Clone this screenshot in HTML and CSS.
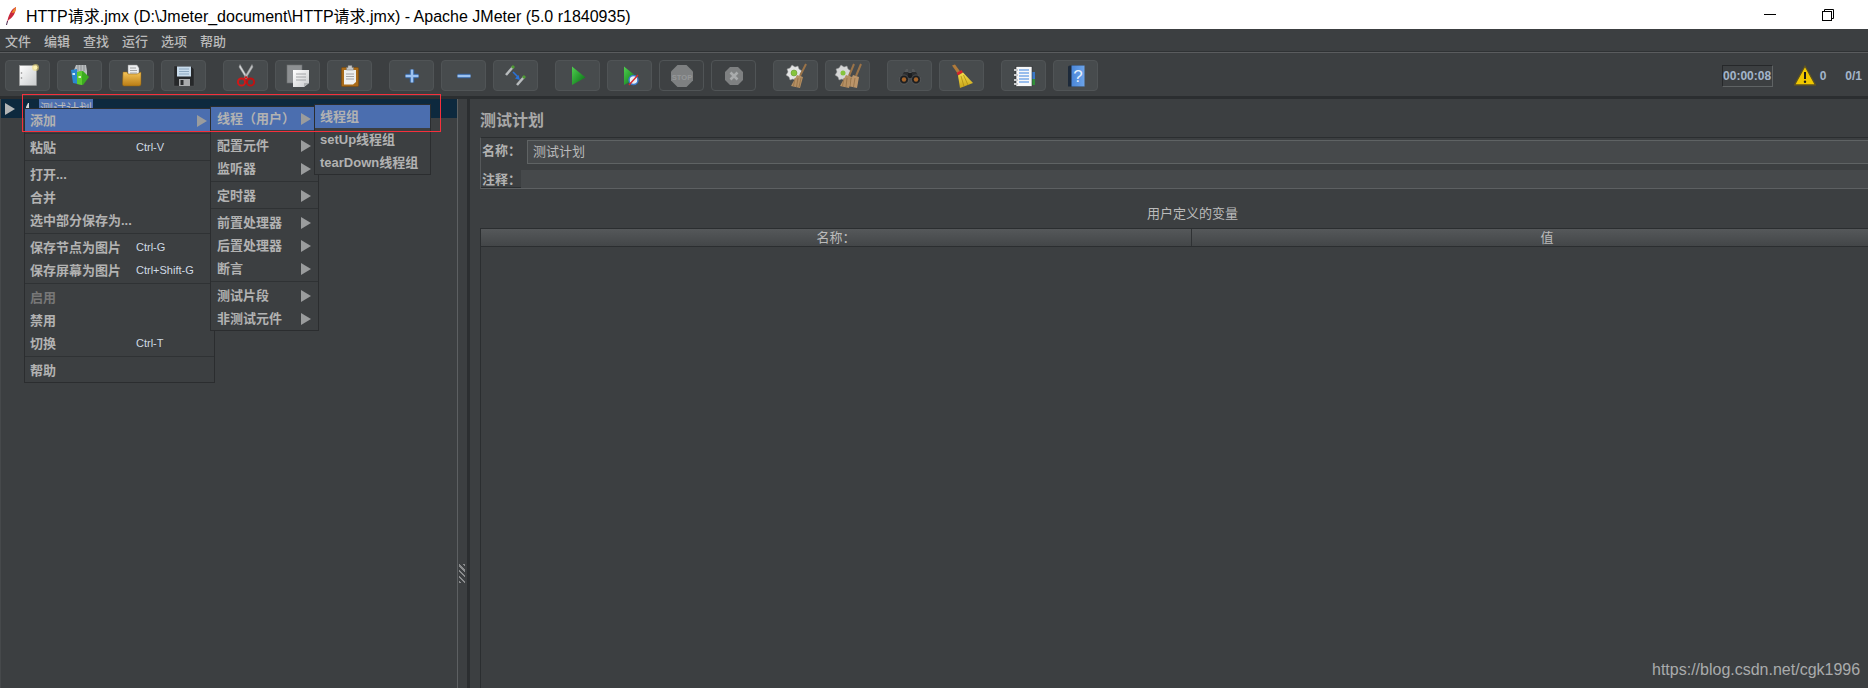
FILE: index.html
```html
<!DOCTYPE html>
<html>

<head>
    <title>Apache JMeter</title>
    <meta charset="utf-8">
    <link rel="stylesheet" href="styles.css">
</head>

<body>
    <!-- shared gradients for the toolbar icons -->
    <svg class="defs" width="0" height="0">
        <defs>
            <linearGradient id="gPage" x1="0" y1="0" x2="1" y2="1">
                <stop offset="0" stop-color="#ffffff" />
                <stop offset="1" stop-color="#c9cbcc" />
            </linearGradient>
            <linearGradient id="gFolder" x1="0" y1="0" x2="0" y2="1">
                <stop offset="0" stop-color="#f5c55a" />
                <stop offset="1" stop-color="#b97c14" />
            </linearGradient>
            <linearGradient id="gPlay" x1="0" y1="0" x2="1" y2="1">
                <stop offset="0" stop-color="#4fd04f" />
                <stop offset="1" stop-color="#056b12" />
            </linearGradient>
            <linearGradient id="gBroom" x1="0" y1="0" x2="0" y2="1">
                <stop offset="0" stop-color="#f4dd4c" />
                <stop offset="1" stop-color="#c9a416" />
            </linearGradient>
            <linearGradient id="gHelp" x1="0" y1="0" x2="1" y2="0">
                <stop offset="0" stop-color="#4a86d8" />
                <stop offset="1" stop-color="#6ca4ea" />
            </linearGradient>
        </defs>
    </svg>

    <header class="titlebar">
        <svg class="feather" viewBox="0 0 12 22" width="12" height="22">
            <path d="M2 19 C3 12 6 5 11 3 C11 8 8 14 3.5 16 Z" fill="#c8283c" />
            <path d="M6.5 9 C8 6 9.500 4 11 3 C11 5 10.500 7 9.500 8.500 Z" fill="#ef8a2b" />
            <path d="M1.500 21 L2.500 17" stroke="#4a2a50" stroke-width="1" />
        </svg>
        <span class="titlebar-text">HTTP请求.jmx (D:\Jmeter_document\HTTP请求.jmx) - Apache JMeter (5.0 r1840935)</span>
        <div class="window-buttons">
            <svg viewBox="0 0 12 2" width="12" height="2">
                <path d="M0 .5 H12" stroke="#000" stroke-width="1" />
            </svg>
            <svg viewBox="0 0 12 12" width="12" height="12">
                <rect x=".5" y="2.500" width="9" height="9" fill="none" stroke="#000" />
                <path d="M2.500 2.500 V.5 H11.500 V9.500 H9.500" fill="none" stroke="#000" />
            </svg>
        </div>
    </header>

    <nav class="menubar">
        <span>文件</span>
        <span>编辑</span>
        <span>查找</span>
        <span>运行</span>
        <span>选项</span>
        <span>帮助</span>
    </nav>

    <div class="toolbar">
        <div class="tool-group">
            <button class="tool">
                <svg viewBox="0 0 28 28">
                    <rect x="5.500" y="3.500" width="17" height="20" fill="url(#gPage)" stroke="#9a9c9c" stroke-width=".6" />
                    <circle cx="7.500" cy="11" r=".8" fill="#888" />
                    <circle cx="7.500" cy="16" r=".8" fill="#888" />
                    <circle cx="21.500" cy="5.500" r="3.500" fill="#f4e07a" opacity=".55" />
                    <circle cx="21.500" cy="5.500" r="2" fill="#fff3b0" />
                </svg>
            </button>
            <button class="tool">
                <svg viewBox="0 0 28 28">
                    <path d="M8 8 L10 3 H20 L21 9 V14 H9 Z" fill="#b9bdbf" />
                    <path d="M12 3 V9 M15 3 V9 M18 3 V9" stroke="#8b8f91" stroke-width="1" />
                    <path d="M5 8 L11 7 L12 22 L7 21 Z" fill="#2a88d0" />
                    <path d="M11 10 L17 9 L23 15 L17 23 L11 22 Z" fill="#3cab20" />
                    <path d="M11 10 L16 9 V23 L11 22 Z" fill="#5ccb30" />
                    <rect x="6.500" y="11" width="2.500" height="2" fill="#cde6f7" />
                    <rect x="12.500" y="14" width="2.500" height="2" fill="#d6f3c8" />
                </svg>
            </button>
            <button class="tool">
                <svg viewBox="0 0 28 28">
                    <path d="M10 3 H19 L21 6 V14 H10 Z" fill="#eceef0" stroke="#8a8a8a" stroke-width=".5" />
                    <path d="M12 6 H18 M12 8.500 H19 M12 11 H19" stroke="#909090" stroke-width=".8" />
                    <path d="M5 10 H9 L10 12 H19 L23 10 V22 Q23 24 21 24 H6 Q4.500 24 4.500 22 Z" fill="url(#gFolder)" stroke="#8f6210" stroke-width=".5" />
                </svg>
            </button>
            <button class="tool">
                <svg viewBox="0 0 28 28">
                    <path d="M4 4 H21 L24 7 V24 H4 Z" fill="#26282a" stroke="#55585a" stroke-width=".4" />
                    <rect x="7" y="4.500" width="14" height="10" fill="#c9dcec" />
                    <path d="M9 7 H19 M9 9.500 H19 M9 12 H19" stroke="#7d9ab5" stroke-width=".8" />
                    <rect x="9" y="17" width="11" height="7" fill="#a8aaac" />
                    <rect x="10.500" y="18" width="3" height="5" fill="#2a2c2e" />
                </svg>
            </button>
        </div>
        <div class="tool-group">
            <button class="tool">
                <svg viewBox="0 0 28 28">
                    <path d="M8 2.500 L16 16 L14.500 17 L7 5 Z" fill="#d5d7d8" stroke="#8d8f90" stroke-width=".5" />
                    <path d="M20 2.500 L12 16 L13.500 17 L21 5 Z" fill="#bfc1c2" stroke="#8d8f90" stroke-width=".5" />
                    <circle cx="9.500" cy="20" r="3.600" fill="none" stroke="#d01818" stroke-width="2" />
                    <circle cx="18.500" cy="20" r="3.600" fill="none" stroke="#c01212" stroke-width="2" />
                    <path d="M12 17 L14 15 L16 17" fill="none" stroke="#d01818" stroke-width="1.600" />
                </svg>
            </button>
            <button class="tool">
                <svg viewBox="0 0 28 28">
                    <rect x="3" y="3" width="15" height="18" fill="#8d9092" stroke="#6d7072" stroke-width=".6" />
                    <path d="M9 8 H25 V21 L20 25 H9 Z" fill="url(#gPage)" />
                    <path d="M12 12 H22 M12 15 H22 M12 18 H22" stroke="#9a9c9e" stroke-width=".9" />
                    <path d="M20 25 V21 H25 Z" fill="#b0b2b4" />
                </svg>
            </button>
            <button class="tool">
                <svg viewBox="0 0 28 28">
                    <rect x="5.500" y="5.500" width="17" height="19" rx="1" fill="#a86a18" stroke="#7a4a0c" stroke-width=".6" />
                    <path d="M8 8 H20 V20 L17 22.500 H8 Z" fill="#eeefef" />
                    <path d="M10 12 H18 M10 14.500 H18 M10 17 H18" stroke="#8f9193" stroke-width=".8" />
                    <path d="M10.500 8 V5.500 H12 V3.500 H16 V5.500 H17.500 V8 Z" fill="#c3c5c6" stroke="#77797a" stroke-width=".5" />
                </svg>
            </button>
        </div>
        <div class="tool-group">
            <button class="tool">
                <svg viewBox="0 0 28 28">
                    <path d="M14 7.500 V20.500 M7.500 14 H20.500" stroke="#2f5f9f" stroke-width="4.500" />
                    <path d="M14 7.500 V20.500 M7.500 14 H20.500" stroke="#9cc2f0" stroke-width="2.500" />
                </svg>
            </button>
            <button class="tool">
                <svg viewBox="0 0 28 28">
                    <path d="M7.500 14 H20.500" stroke="#2f5f9f" stroke-width="4.500" />
                    <path d="M7.500 14 H20.500" stroke="#9cc2f0" stroke-width="2.500" />
                </svg>
            </button>
            <button class="tool">
                <svg viewBox="0 0 28 28">
                    <path d="M4 13 L11 5" stroke="#b8bcbe" stroke-width="2.500" />
                    <path d="M10 6 L12 4" stroke="#4f9a35" stroke-width="3" />
                    <path d="M15 23 L22 15" stroke="#b8bcbe" stroke-width="2.500" />
                    <path d="M21 16 L23 14" stroke="#4f9a35" stroke-width="3" />
                    <path d="M11 10 L16 15" stroke="#2a72d8" stroke-width="1.600" />
                    <path d="M18 18 L13 16.500 L16.500 13 Z" fill="#2a72d8" />
                </svg>
            </button>
        </div>
        <div class="tool-group">
            <button class="tool">
                <svg viewBox="0 0 28 28">
                    <path d="M8 4.500 L21.500 15.500 L8 23 Z" fill="url(#gPlay)" />
                </svg>
            </button>
            <button class="tool">
                <svg viewBox="0 0 28 28">
                    <path d="M8 4.500 L21.500 15.500 L8 23 Z" fill="url(#gPlay)" />
                    <circle cx="17.500" cy="18" r="4.500" fill="#e8eef6" stroke="#3a78c8" stroke-width="1.500" />
                    <path d="M13 23 L22 13" stroke="#d82a2a" stroke-width="1.400" />
                </svg>
            </button>
            <button class="tool tool-off">
                <svg viewBox="0 0 28 28">
                    <path d="M9.500 3 H18.500 L25 9.500 V18.500 L18.500 25 H9.500 L3 18.500 V9.500 Z" fill="#7e8081" />
                    <text x="14" y="17.500" class="stop-text">STOP</text>
                </svg>
            </button>
            <button class="tool tool-off">
                <svg viewBox="0 0 28 28">
                    <path d="M10 5 H18 L23 10 V18 L18 23 H10 L5 18 V10 Z" fill="#7e8081" />
                    <path d="M10.500 10.500 L17.500 17.500 M17.500 10.500 L10.500 17.500" stroke="#a9abac" stroke-width="2.600" />
                </svg>
            </button>
        </div>
        <div class="tool-group">
            <button class="tool">
                <svg viewBox="0 0 28 28">
                    <path d="M10 3 L13 5 L16 4 L17 7 L20 9 L18 12 L19 15 L16 16 L14 19 L11 17 L8 18 L7 15 L4 13 L6 10 L5 7 L8 6 Z" fill="#e3e4e4" stroke="#8f9192" stroke-width=".5" />
                    <circle cx="12" cy="11" r="3" fill="#86c43c" stroke="#5c8a2a" stroke-width=".5" />
                    <path d="M24 2 L18 14" stroke="#9a7348" stroke-width="2" />
                    <path d="M15 13 L21 15 L18 26 L9 24 Z" fill="#b58f62" />
                    <path d="M13 16 L11.500 24 M16 16 L14.500 25 M19 16 L17 25" stroke="#8b6a42" stroke-width=".7" />
                </svg>
            </button>
            <button class="tool">
                <svg viewBox="0 0 28 28">
                    <path d="M7 3 L10 5 L13 4 L14 7 L17 9 L15 12 L16 15 L13 16 L11 19 L8 17 L5 18 L4 15 L1 13 L3 10 L2 7 L5 6 Z" fill="#d5d6d6" stroke="#8f9192" stroke-width=".5" />
                    <circle cx="9" cy="11" r="2.500" fill="#86c43c" />
                    <path d="M20 2 L15 14 M27 2 L22 14" stroke="#9a7348" stroke-width="2" />
                    <path d="M12 13 L18 15 L15 26 L6 24 Z" fill="#b58f62" />
                    <path d="M19 13 L25 15 L23 26 L14 24 Z" fill="#bb956a" />
                    <path d="M10 16 L8.500 24 M13 16 L12 25 M17 16 L16 25 M21 16 L19.500 25" stroke="#8b6a42" stroke-width=".7" />
                </svg>
            </button>
        </div>
        <div class="tool-group">
            <button class="tool">
                <svg viewBox="0 0 28 28">
                    <path d="M10 7 H12 V10 H16 V7 H18 L20 11 H8 Z" fill="#55585a" />
                    <path d="M3.500 18 L8 10 H12.500 V18 Z M15.500 18 V10 H20 L24.500 18 Z" fill="#2c2e30" />
                    <rect x="12" y="11" width="4" height="5" fill="#1c1e20" />
                    <circle cx="8" cy="17.500" r="4.500" fill="#1d1f21" stroke="#77797b" stroke-width=".5" />
                    <circle cx="20" cy="17.500" r="4.500" fill="#1d1f21" stroke="#77797b" stroke-width=".5" />
                    <circle cx="8" cy="17.500" r="2.200" fill="#a5642a" />
                    <circle cx="20" cy="17.500" r="2.200" fill="#a5642a" />
                </svg>
            </button>
            <button class="tool">
                <svg viewBox="0 0 28 28">
                    <path d="M4 3.500 L7 2.500 L12.500 10 L10 12 Z" fill="#b07a3a" />
                    <path d="M8.500 11 L13.500 8 L15 10.500 L10 13.500 Z" fill="#d4242a" />
                    <path d="M10 13.500 L15 10.500 L25 21 L12 26 Z" fill="url(#gBroom)" />
                    <path d="M13 14 L16 24.500 M15.500 13 L20 23 " stroke="#a5860f" stroke-width=".7" />
                </svg>
            </button>
        </div>
        <div class="tool-group">
            <button class="tool">
                <svg viewBox="0 0 28 28">
                    <rect x="21" y="10" width="4" height="7" fill="#3a78c8" />
                    <rect x="21" y="17" width="4" height="6" fill="#2f8f3a" />
                    <rect x="6" y="4.500" width="16" height="20" fill="#f7f8f9" stroke="#2b2d2f" stroke-width=".6" />
                    <path d="M9 8 H19 M9 11 H19 M9 14 H19 M9 17 H19 M9 20 H19" stroke="#3a82e0" stroke-width="1.100" />
                    <path d="M4 8 H8 M4 13 H8 M4 18 H8 M4 22 H8" stroke="#c9cbcc" stroke-width="1.800" />
                </svg>
            </button>
            <button class="tool">
                <svg viewBox="0 0 28 28">
                    <path d="M6 5 Q6 3.500 8 3.500 H22 V24.500 H6 Z" fill="#1d2a3a" />
                    <rect x="9.500" y="3.500" width="13" height="21" fill="url(#gHelp)" />
                    <text x="16" y="20" class="help-text">?</text>
                </svg>
            </button>
        </div>

        <div class="status">
            <span class="timer">00:00:08</span>
            <svg class="warn" viewBox="0 0 22 21" width="22" height="21">
                <path d="M11 1 L21.500 20 H.5 Z" fill="#f0c800" stroke="#5d5220" stroke-width="1.300" />
                <path d="M11 7 V14" stroke="#1b1b1b" stroke-width="2" />
                <circle cx="11" cy="16.800" r="1.200" fill="#1b1b1b" />
            </svg>
            <span class="warn-count">0</span>
            <span class="threads">0/1</span>
        </div>
    </div>

    <main class="workspace">
        <aside class="tree-pane">
            <div class="tree-row">
                <svg class="tree-arrow" viewBox="0 0 10 12" width="10" height="12">
                    <path d="M0 0 L10 6 L0 12 Z" fill="#b3b5b6" />
                </svg>
                <svg class="tree-icon" viewBox="0 0 6 12" width="6" height="12">
                    <path d="M1 12 V4 L3 0 H4 V4 L5 12 Z" fill="#d6d8d9" />
                </svg>
                <span class="tree-label">测试计划</span>
            </div>
        </aside>

        <div class="splitter">
            <span class="grip"></span>
        </div>

        <section class="detail-pane">
            <h1 class="plan-title">测试计划</h1>
            <div class="name-panel">
                <div class="name-row">
                    <label class="name-label">名称：</label>
                    <div class="name-input">测试计划</div>
                </div>
                <div class="comment-row">
                    <label class="comment-label">注释：</label>
                    <div class="comment-input"></div>
                </div>
            </div>
            <div class="vars-title">用户定义的变量</div>
            <div class="vars-table">
                <div class="vars-head">
                    <div class="vars-col vars-col-name">名称：</div>
                    <div class="vars-col vars-col-value">值</div>
                </div>
            </div>
        </section>
    </main>

    <!-- right click menu with its two open submenus -->
    <div class="popup popup-main">
        <div class="item item-on"><span>添加</span><i class="arrow"></i></div>
        <div class="sep"></div>
        <div class="item"><span class="item-text">粘贴</span><span class="key">Ctrl-V</span></div>
        <div class="sep"></div>
        <div class="item"><span class="item-text">打开...</span></div>
        <div class="item"><span class="item-text">合并</span></div>
        <div class="item"><span class="item-text">选中部分保存为...</span></div>
        <div class="sep"></div>
        <div class="item"><span class="item-text">保存节点为图片</span><span class="key">Ctrl-G</span></div>
        <div class="item"><span class="item-text">保存屏幕为图片</span><span class="key">Ctrl+Shift-G</span></div>
        <div class="sep"></div>
        <div class="item item-off"><span class="item-text">启用</span></div>
        <div class="item"><span class="item-text">禁用</span></div>
        <div class="item"><span class="item-text">切换</span><span class="key">Ctrl-T</span></div>
        <div class="sep"></div>
        <div class="item"><span class="item-text">帮助</span></div>
    </div>

    <div class="popup popup-add">
        <div class="item item-on"><span>线程（用户）</span><i class="arrow"></i></div>
        <div class="sep"></div>
        <div class="item"><span>配置元件</span><i class="arrow"></i></div>
        <div class="item"><span>监听器</span><i class="arrow"></i></div>
        <div class="sep"></div>
        <div class="item"><span>定时器</span><i class="arrow"></i></div>
        <div class="sep"></div>
        <div class="item"><span>前置处理器</span><i class="arrow"></i></div>
        <div class="item"><span>后置处理器</span><i class="arrow"></i></div>
        <div class="item"><span>断言</span><i class="arrow"></i></div>
        <div class="sep"></div>
        <div class="item"><span>测试片段</span><i class="arrow"></i></div>
        <div class="item"><span>非测试元件</span><i class="arrow"></i></div>
    </div>

    <div class="popup popup-threads">
        <div class="item item-on"><span>线程组</span></div>
        <div class="item"><span>setUp线程组</span></div>
        <div class="item"><span>tearDown线程组</span></div>
    </div>

    <div class="red-mark"></div>
    <div class="watermark">https://blog.csdn.net/cgk1996</div>
</body>

</html>
```

FILE: styles.css
```css
* {
    box-sizing: border-box;
}

html,
body {
    margin: 0;
    height: 100%;
}

body {
    width: 1868px;
    height: 688px;
    overflow: hidden;
    display: flex;
    flex-direction: column;
    position: relative;
    background-color: #3c3f41;
    color: #bbbbbb;
    font-family: "Liberation Sans", "Noto Sans CJK SC", sans-serif;
    font-size: 13px;
}

.defs {
    position: absolute;
}

/* window title */
.titlebar {
    height: 29px;
    flex: none;
    display: flex;
    align-items: center;
    background-color: #ffffff;
    color: #000000;
    font-size: 16px;
    padding-left: 5px;
}

.feather {
    margin-right: 9px;
}

.titlebar-text {
    white-space: nowrap;
}

.window-buttons {
    margin-left: auto;
    display: flex;
    align-items: center;
    gap: 46px;
    padding-right: 34px;
}

/* menu bar */
.menubar {
    height: 24px;
    flex: none;
    display: flex;
    align-items: center;
    gap: 13px;
    padding-left: 5px;
    font-weight: 500;
    border-bottom: 1px solid #5a5c5e;
    box-shadow: inset 0 -1px 0 #2f3234;
}

/* toolbar */
.toolbar {
    height: 46px;
    flex: none;
    display: flex;
    align-items: flex-start;
    gap: 17px;
    padding: 7px 6px 0 5px;
    border-bottom: 3px solid #2b2e30;
}

.tool-group {
    display: flex;
    gap: 7px;
}

.tool {
    width: 45px;
    height: 31px;
    padding: 0;
    display: flex;
    align-items: center;
    justify-content: center;
    background-color: #474b4d;
    border: 1px solid #505456;
    border-radius: 4px;
}

.tool svg {
    width: 28px;
    height: 28px;
    flex: none;
}

.tool-off {
    background-color: #3e4143;
    border-color: #505456;
}

.stop-text {
    font-family: "Liberation Sans", sans-serif;
    font-size: 7.500px;
    font-weight: bold;
    fill: #959798;
    text-anchor: middle;
}

.help-text {
    font-family: "Liberation Sans", sans-serif;
    font-size: 17px;
    fill: #e6f0fb;
    text-anchor: middle;
}

.status {
    margin-left: auto;
    display: flex;
    align-items: center;
    height: 31px;
    color: #a3b5ca;
    font-size: 12px;
    font-weight: bold;
}

.timer {
    width: 51px;
    height: 22px;
    line-height: 20px;
    text-align: center;
    border: 1px solid #5f6364;
    border-top-color: #26282a;
    border-left-color: #26282a;
}

.warn {
    margin-left: 21px;
}

.warn-count {
    margin-left: 4px;
}

.threads {
    margin-left: 19px;
}

/* main split */
.workspace {
    flex: 1;
    min-height: 0;
    display: flex;
}

.tree-pane {
    width: 458px;
    flex: none;
    border-left: 1px solid #46494b;
    border-right: 1px solid #5d6062;
}

.tree-row {
    height: 19px;
    display: flex;
    align-items: center;
    background-color: #0d293e;
    padding: 0 0 0 4px;
}

.tree-icon {
    margin-left: 10px;
}

.tree-label {
    margin-left: 8px;
    padding: 0 1px;
    height: 19px;
    line-height: 19px;
    background-color: #4b6eaf;
}

.splitter {
    width: 12px;
    flex: none;
    display: flex;
    align-items: flex-start;
    padding: 465px 0 0 1px;
    border-right: 3px solid #2b2e30;
}

.grip {
    width: 6px;
    height: 19px;
    background-image: repeating-linear-gradient(45deg, #8a8c8d 0 1.500px, #3c3f41 1.500px 4px);
}

/* test plan panel */
.detail-pane {
    flex: 1;
    min-width: 0;
    display: flex;
    flex-direction: column;
    padding-left: 10px;
    overflow: hidden;
}

.plan-title {
    margin: 0;
    height: 38px;
    flex: none;
    padding-top: 11px;
    font-size: 16px;
    line-height: 22px;
    font-weight: bold;
    color: #a8a8a8;
    white-space: nowrap;
}

.name-panel {
    flex: none;
    height: 52px;
    padding-top: 2px;
    border-top: 1px solid #2b2e30;
    border-left: 1px solid #55585a;
    border-bottom: 1px solid #5d6062;
    box-shadow: inset 0 -1px 0 #2b2e30;
}

.name-row {
    display: flex;
    height: 24px;
}

.comment-row {
    display: flex;
    height: 18px;
    margin-top: 6px;
}

.name-label,
.comment-label {
    flex: none;
    padding-left: 1px;
    font-weight: bold;
    color: #b2b2b2;
    line-height: 22px;
}

.name-label {
    width: 46px;
}

.comment-label {
    width: 40px;
    line-height: 19px;
}

.name-input {
    flex: 1;
    padding-left: 5px;
    line-height: 22px;
    background-color: #46494b;
    border: 1px solid #5f6364;
    border-right: 0;
}

.comment-input {
    flex: 1;
    background-color: #46494b;
}

.vars-title {
    flex: none;
    height: 39px;
    padding-top: 16px;
    line-height: 18px;
    padding-left: 667px;
    white-space: nowrap;
}

.vars-table {
    flex: 1;
    width: 1422px;
    border-left: 1px solid #2b2e30;
}

.vars-head {
    height: 19px;
    display: flex;
    background-image: linear-gradient(#55585a, #434648);
    border-top: 1px solid #2b2e30;
    border-bottom: 1px solid #2b2e30;
}

.vars-col {
    text-align: center;
    line-height: 17px;
}

.vars-col-name {
    width: 711px;
    border-right: 1px solid #2f3234;
}

.vars-col-value {
    flex: 1;
}

/* popup menus */
.popup {
    position: absolute;
    background-color: #3c3f41;
    border: 1px solid #2b2d2f;
    font-weight: bold;
    color: #b2b2b2;
    white-space: nowrap;
}

.popup-main {
    left: 24px;
    top: 108px;
    width: 191px;
    height: 275px;
    z-index: 1;
}

.popup-add {
    left: 210px;
    top: 106px;
    width: 109px;
    height: 225px;
    z-index: 2;
}

.popup-threads {
    left: 314px;
    top: 104px;
    width: 117px;
    height: 71px;
    z-index: 3;
}

.item {
    height: 23px;
    display: flex;
    align-items: center;
    padding: 0 7px 0 5px;
}

.item span {
    margin-top: -2px;
}

.item-on {
    background-color: #4b6eaf;
}

.item-off {
    color: #777777;
}

.item-text {
    width: 106px;
    flex: none;
}

.key {
    font-size: 11px;
    font-weight: normal;
    color: #d0dae4;
}

.arrow {
    margin-left: auto;
    width: 0;
    height: 0;
    border-left: 10px solid #9a9c9d;
    border-top: 6px solid transparent;
    border-bottom: 6px solid transparent;
}

.popup-add .item {
    padding-left: 6px;
}

.sep {
    height: 4px;
    background-image: linear-gradient(#2f3234, #2f3234);
    background-size: 100% 1px;
    background-position: 0 1px;
    background-repeat: no-repeat;
}

.red-mark {
    position: absolute;
    left: 22px;
    top: 94px;
    width: 419px;
    height: 38px;
    border: 1px solid #f5303c;
    z-index: 4;
}

.watermark {
    position: absolute;
    left: 1652px;
    top: 661px;
    color: #a9abac;
    font-size: 16px;
    line-height: 18px;
    z-index: 4;
}
```
